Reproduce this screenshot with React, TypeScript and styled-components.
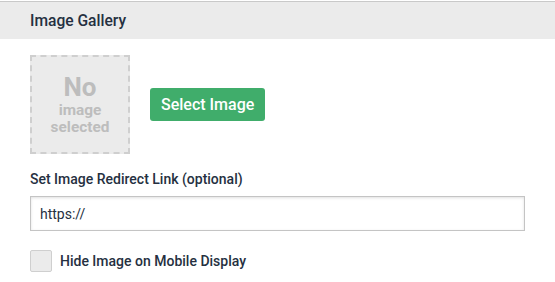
import React, { useState } from 'react'
import styled, { createGlobalStyle } from 'styled-components'

const GlobalStyle = createGlobalStyle`
    html, body {
        margin: 0;
        padding: 0;
        background: #ffffff;
        font-family: Roboto, "Liberation Sans", Arial, sans-serif;
    }
`

const Panel = styled.div`
    width: 555px;
    height: 282px;
    background: #fff;
    box-sizing: border-box;
`

const PanelHeader = styled.div`
    height: 37px;
    margin-top: 1px;
    border-top: 1px solid #c9c9c9;
    background: #ebebeb;
    display: flex;
    align-items: center;
    padding-left: 30px;
    font-size: 15.6px;
    font-weight: 500;
    color: #253041;
`

const PanelBody = styled.div`
    padding: 16px 30px 0 30px;
    display: flex;
    flex-direction: column;
`

const ImageRow = styled.div`
    display: flex;
    align-items: center;
    gap: 20px;
`

const Placeholder = styled.div`
    width: 100px;
    height: 99px;
    box-sizing: border-box;
    border: 2px dashed #cfcfcf;
    background: #ebebeb;
    display: flex;
    flex-direction: column;
    align-items: center;
    justify-content: center;
    color: #bdbdbd;
    font-weight: 700;
    text-align: center;
`

const PlaceholderBig = styled.div`
    font-size: 26px;
    line-height: 28px;
    margin-bottom: 1px;
`

const PlaceholderSmall = styled.div`
    font-size: 15.4px;
    line-height: 17px;
`

const SelectButton = styled.button`
    height: 33px;
    padding: 0 11px;
    background: #40ad6b;
    color: #fff;
    border: none;
    border-radius: 3px;
    font-family: inherit;
    font-size: 16px;
    font-weight: 500;
    cursor: pointer;
`

const FieldLabel = styled.label`
    margin-top: 17px;
    font-size: 14px;
    font-weight: 500;
    color: #253041;
`

const TextInput = styled.input`
    margin-top: 9px;
    width: 495px;
    height: 35px;
    box-sizing: border-box;
    border: 1px solid #c4c4c4;
    box-shadow: inset 0 1px 3px rgba(0, 0, 0, 0.12);
    padding: 0 9px;
    font-family: inherit;
    font-size: 14px;
    color: #253041;
    outline: none;
`

const CheckRow = styled.label`
    margin-top: 19px;
    display: flex;
    align-items: center;
    gap: 8px;
    font-size: 14px;
    font-weight: 500;
    color: #253041;
    cursor: pointer;
`

const CheckBox = styled.span<{ $checked: boolean }>`
    width: 22px;
    height: 22px;
    box-sizing: border-box;
    border: 1px solid #cfcfcf;
    border-radius: 2px;
    background: ${({ $checked }) => ($checked ? '#40ad6b' : '#ebebeb')};
`

export default function App() {
    const [url, setUrl] = useState('https://')
    const [hide, setHide] = useState(false)

    return (
        <>
            <GlobalStyle />
            <Panel>
                <PanelHeader>Image Gallery</PanelHeader>
                <PanelBody>
                    <ImageRow>
                        <Placeholder>
                            <PlaceholderBig>No</PlaceholderBig>
                            <PlaceholderSmall>image</PlaceholderSmall>
                            <PlaceholderSmall>selected</PlaceholderSmall>
                        </Placeholder>
                        <SelectButton>Select Image</SelectButton>
                    </ImageRow>
                    <FieldLabel>Set Image Redirect Link (optional)</FieldLabel>
                    <TextInput
                        value={url}
                        onChange={(e) => setUrl(e.target.value)}
                    />
                    <CheckRow onClick={() => setHide(!hide)}>
                        <CheckBox $checked={hide} />
                        Hide Image on Mobile Display
                    </CheckRow>
                </PanelBody>
            </Panel>
        </>
    )
}
